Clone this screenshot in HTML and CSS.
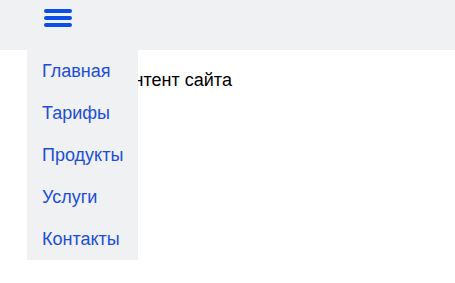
FILE: index.html
```html
<!DOCTYPE html>
<html lang="ru">
<head>
  <meta charset="UTF-8">
  <title>Сайт</title>
  <link rel="stylesheet" href="styles.css">
</head>
<body>

<header class="header">
  <button class="burger" aria-label="Меню">
    <span class="burger-line"></span>
    <span class="burger-line"></span>
    <span class="burger-line"></span>
  </button>
  <nav class="dropdown">
    <a class="dropdown-item" href="#">Главная</a>
    <a class="dropdown-item" href="#">Тарифы</a>
    <a class="dropdown-item" href="#">Продукты</a>
    <a class="dropdown-item" href="#">Услуги</a>
    <a class="dropdown-item" href="#">Контакты</a>
  </nav>
</header>

<main class="content">
  <p>Основной контент сайта</p>
</main>

</body>
</html>
```

FILE: styles.css
```css
* {
  margin: 0;
  padding: 0;
  border: 0;
  box-sizing: border-box;
}
html, body {
  min-height: 100%;
}
body {
  min-height: 100vh;
  font-family: "Liberation Sans", Arial, sans-serif;
  font-size: 18px;
  color: #000;
  background: #fff;
}
.header {
  position: relative;
  height: 50px;
  padding: 9px 0 0 44px;
  background: #f0f1f3;
}
.burger {
  display: flex;
  flex-direction: column;
  gap: 3px;
  width: 28px;
  background: none;
  cursor: pointer;
}
.burger-line {
  display: block;
  height: 4px;
  border-radius: 2px;
  background: #0b4fe6;
}
.dropdown {
  position: absolute;
  top: 50px;
  left: 27px;
  display: flex;
  flex-direction: column;
  background: #f0f1f3;
}
.dropdown-item {
  padding: 10px 15px;
  line-height: 22px;
  color: #1d4ed8;
  text-decoration: none;
}
.content {
  padding: 20px 28px;
}
```
